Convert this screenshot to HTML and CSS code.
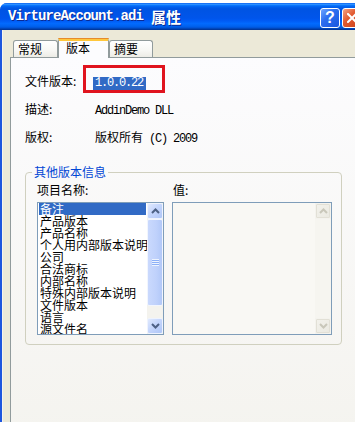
FILE: index.html
```html
<!DOCTYPE html>
<html lang="zh-CN">
<head>
<meta charset="utf-8">
<title>VirtureAccount.adi 属性</title>
<link rel="stylesheet" href="styles.css">
</head>
<body>
<div class="screen">
  <div class="desk"></div>
  <div class="window">
    <div class="titlebar">
      <div class="title"><span class="t-latin">VirtureAccount.adi</span><span class="t-cjk">属性</span></div>
      <div class="caption-btns">
        <span class="cbtn help">?</span>
        <span class="cbtn close"><svg width="10" height="10" viewBox="0 0 10 10"><path d="M1 1 L9 9 M9 1 L1 9" stroke="#fff" stroke-width="2" stroke-linecap="square" fill="none"/></svg></span>
      </div>
    </div>
    <div class="client">
      <div class="tabs">
        <div class="tab tab-general">常规</div>
        <div class="tab tab-version active">版本</div>
        <div class="tab tab-summary">摘要</div>
      </div>
      <div class="panel">
        <div class="info">
          <div class="row">
            <span class="label">文件版本:</span>
            <span class="value"><span class="sel mono">1.0.0.22</span></span>
            <span class="redbox"></span>
          </div>
          <div class="row">
            <span class="label">描述:</span>
            <span class="value plain"><span class="mono">AddinDemo DLL</span></span>
          </div>
          <div class="row">
            <span class="label">版权:</span>
            <span class="value plain">版权所有<span class="mono"> (C) 2009</span></span>
          </div>
        </div>
        <fieldset class="group">
          <legend>其他版本信息</legend>
          <div class="cols">
            <div class="col">
              <div class="col-label">项目名称:</div>
              <div class="listbox">
                <ul class="items">
                  <li class="selected">备注</li>
                  <li>产品版本</li>
                  <li>产品名称</li>
                  <li>个人用内部版本说明</li>
                  <li>公司</li>
                  <li>合法商标</li>
                  <li>内部名称</li>
                  <li>特殊内部版本说明</li>
                  <li>文件版本</li>
                  <li>语言</li>
                  <li>源文件名</li>
                </ul>
                <div class="scrollbar">
                  <div class="sb-btn"><svg width="9" height="6" viewBox="0 0 9 6"><path d="M1 5 L4.5 1.5 L8 5" stroke="#4D6185" stroke-width="2" fill="none"/></svg></div>
                  <div class="sb-thumb"><span class="grip"></span></div>
                  <div class="sb-track"></div>
                  <div class="sb-btn"><svg width="9" height="6" viewBox="0 0 9 6"><path d="M1 1 L4.5 4.5 L8 1" stroke="#4D6185" stroke-width="2" fill="none"/></svg></div>
                </div>
              </div>
            </div>
            <div class="col col-value">
              <div class="col-label">值:</div>
              <div class="listbox disabled">
                <div class="items"></div>
                <div class="scrollbar">
                  <div class="sb-btn"><svg width="9" height="6" viewBox="0 0 9 6"><path d="M1 5 L4.5 1.5 L8 5" stroke="#C9C7BA" stroke-width="2" fill="none"/></svg></div>
                  <div class="sb-track"></div>
                  <div class="sb-btn"><svg width="9" height="6" viewBox="0 0 9 6"><path d="M1 1 L4.5 4.5 L8 1" stroke="#C9C7BA" stroke-width="2" fill="none"/></svg></div>
                </div>
              </div>
            </div>
          </div>
        </fieldset>
      </div>
    </div>
  </div>
</div>
</body>
</html>
```

FILE: styles.css
```css
* { box-sizing: border-box; }
html, body { margin: 0; padding: 0; }
body {
  background: #fff;
  font-family: "Noto Sans CJK SC", "Noto Sans", sans-serif;
  font-size: 12px;
  color: #000;
}
.screen {
  width: 355px;
  height: 422px;
  overflow: hidden;
  background: #fff;
}
.desk { height: 3px; background: #fff; }

.window {
  width: 365px;
  background: #1E56DE;
  border-radius: 7px 7px 0 0;
}
.titlebar {
  height: 27px;
  display: flex;
  padding: 0 3px 0 8px;
  border-radius: 7px 7px 0 0;
  background: linear-gradient(to bottom, #0058EE 0%, #3593FF 4%, #288EFF 6%, #127DFF 8%, #036FFC 10%, #0262EE 14%, #0057E5 20%, #0054E3 24%, #0055EB 56%, #005BF5 66%, #026AFE 76%, #0062EF 86%, #0052D6 92%, #0040AB 96%, #003092 100%);
}
.title {
  flex: 1;
  display: flex;
  align-items: center;
  color: #fff;
  font-weight: bold;
  white-space: nowrap;
  text-shadow: 1px 1px 0 #0A2A95;
  padding-bottom: 1px;
}
.t-latin {
  font-family: "Liberation Mono", monospace;
  font-size: 14px;
  letter-spacing: -0.9px;
}
.t-cjk {
  font-family: "Noto Sans CJK SC", sans-serif;
  font-size: 15px;
  margin-left: 8px;
}
.caption-btns {
  display: flex;
  gap: 2px;
  margin-top: 5px;
  align-self: flex-start;
}
.cbtn {
  width: 20px;
  height: 20px;
  border: 1px solid #fff;
  border-radius: 3px;
  display: flex;
  align-items: center;
  justify-content: center;
}
.help {
  background: linear-gradient(135deg, #6FA6FF 0%, #2E6FF0 40%, #1A56DF 100%);
  color: #fff;
  font-family: "Liberation Sans", sans-serif;
  font-weight: bold;
  font-size: 16px;
  line-height: 1;
}
.close {
  background: linear-gradient(135deg, #F3A386 0%, #E25B31 40%, #C9401A 100%);
}

.client {
  margin-left: 2px;
  border-left: 1px solid #F6F4EC;
  background: #ECE9D8;
  height: 392px;
  padding: 8px 8px 0 7px;
}
.tabs {
  display: flex;
  align-items: flex-end;
  height: 19px;
  padding-left: 3px;
  position: relative;
  z-index: 1;
}
.tab {
  height: 17px;
  border: 1px solid #919B9C;
  border-bottom: none;
  border-radius: 3px 3px 0 0;
  background: linear-gradient(to bottom, #FFFFFF 0%, #F7F7F4 60%, #EDECE6 100%);
  line-height: 16px;
  white-space: nowrap;
}
.tab-general { width: 45px; padding-left: 4px; }
.tab-version { width: 51px; padding-left: 7px; }
.tab-summary { width: 44px; padding-left: 4px; }
.tab.active {
  height: 20px;
  margin-bottom: -1px;
  background: #FCFCFE;
  border-top: 3px solid #FFC73C;
  line-height: 14px;
  position: relative;
}
.tab.active::before {
  content: "";
  position: absolute;
  left: -1px;
  right: -1px;
  top: -3px;
  height: 1px;
  background: #E68B2C;
  border-radius: 3px 3px 0 0;
}

.panel {
  height: 400px;
  border: 1px solid #919B9C;
  background: linear-gradient(to bottom, #FCFCFE 0%, #F4F3EE 100%);
}
.info {
  display: flex;
  flex-direction: column;
  gap: 14px;
  padding: 16px 0 0 14px;
}
.row {
  display: flex;
  position: relative;
  height: 14px;
  line-height: 14px;
  white-space: nowrap;
}
.label { width: 68px; }
.value.plain { padding-left: 2px; }
.mono {
  font-family: "Liberation Mono", monospace;
  font-size: 12px;
  letter-spacing: -1.2px;
}
.sel {
  display: inline-block;
  background: #316AC5;
  color: #fff;
  padding: 0 3px 0 2px;
  line-height: 13px;
  margin-top: 1px;
}
.redbox {
  position: absolute;
  left: 58px;
  top: -9px;
  width: 82px;
  height: 28px;
  border: 3px solid #E0141E;
}

.group {
  margin: 21px 14px 0 14px;
  border: 1px solid #D0D0BF;
  border-radius: 4px;
  padding: 4px 9px 9px 11px;
  min-width: 0;
}
.group legend {
  color: #0046D5;
  padding: 0 2px;
  margin-left: -5px;
  line-height: 14px;
  font-size: 12px;
}
.cols {
  display: grid;
  grid-template-columns: 127px 160px;
  column-gap: 8px;
}
.col-label {
  height: 14px;
  line-height: 14px;
  margin-bottom: 5px;
}
.col-value .col-label { padding-left: 1px; }
.listbox {
  height: 133px;
  border: 1px solid #7F9DB9;
  background: #fff;
  display: flex;
}
.items {
  flex: 1;
  list-style: none;
  margin: 0;
  padding: 0 1px;
  overflow: hidden;
  min-width: 0;
}
.items li {
  height: 12px;
  line-height: 12px;
  white-space: nowrap;
  padding-left: 1px;
}
.items li.selected {
  background: #316AC5;
  color: #fff;
}
.scrollbar {
  width: 16px;
  display: flex;
  flex-direction: column;
  background: #F4F3EE;
}
.sb-btn {
  height: 16px;
  border: 1px solid #EEF3FE;
  border-radius: 2px;
  background: linear-gradient(135deg, #E0E9FE 0%, #C5D6FC 45%, #AFC6F7 100%);
  display: flex;
  align-items: center;
  justify-content: center;
}
.sb-thumb {
  height: 87px;
  border: 1px solid #F1F5FE;
  border-radius: 2px;
  background: linear-gradient(to right, #CAD9FD 0%, #BFD1FB 60%, #B2C8F8 100%);
  display: flex;
  align-items: center;
  justify-content: center;
}
.grip {
  width: 7px;
  height: 7px;
  background: repeating-linear-gradient(to bottom, #EEF4FE 0px, #EEF4FE 1px, #8CB0F8 1px, #8CB0F8 2px);
}
.sb-track { flex: 1; }

.listbox.disabled { background: #F9F8F4; }
.listbox.disabled .scrollbar { background: #F6F5F0; }
.listbox.disabled .sb-btn {
  border: 1px solid #F4F3EE;
  background: linear-gradient(135deg, #F3F2EC 0%, #EAE9E1 100%);
  box-shadow: inset 0 0 0 1px #E2E0D6;
}
```
